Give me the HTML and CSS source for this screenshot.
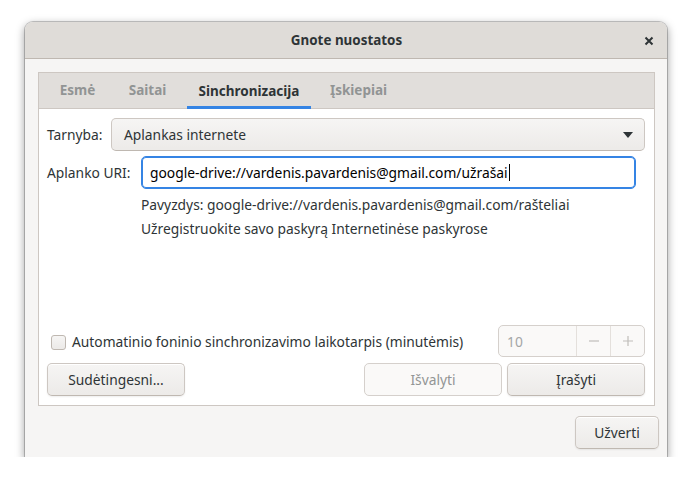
FILE: index.html
```html
<!DOCTYPE html>
<html lang="lt">
<head>
<meta charset="utf-8">
<title>Gnote nuostatos</title>
<link rel="stylesheet" href="styles.css">
</head>
<body>
<div class="window">
  <div class="header">
    <span class="title">Gnote nuostatos</span>
    <span class="close">
      <svg width="10" height="10" viewBox="0 0 10 10"><path d="M1.5 1.5 L8.5 8.5 M8.5 1.5 L1.5 8.5" stroke="#2e3436" stroke-width="2" fill="none"/></svg>
    </span>
  </div>
  <div class="content">
    <div class="notebook">
      <div class="tabs">
        <div class="tab tab-general">Esmė</div>
        <div class="tab tab-links">Saitai</div>
        <div class="tab tab-sync active">Sinchronizacija</div>
        <div class="tab tab-addins">Įskiepiai</div>
      </div>
      <div class="page">
        <div class="row">
          <span class="label label-service">Tarnyba:</span>
          <div class="combo">
            <span>Aplankas internete</span>
            <svg width="10" height="6" viewBox="0 0 10 6"><path d="M0 0 L10 0 L5 6 Z" fill="#2e3436"/></svg>
          </div>
        </div>
        <div class="row row-uri">
          <span class="label label-uri">Aplanko URI:</span>
          <div class="entry"><span>google-drive://vardenis.pavardenis@gmail.com/užrašai</span><span class="cursor"></span></div>
        </div>
        <div class="hints">
          <div class="hint">Pavyzdys: google-drive://vardenis.pavardenis@gmail.com/rašteliai</div>
          <div class="hint">Užregistruokite savo paskyrą Internetinėse paskyrose</div>
        </div>
        <div class="bottom">
          <div class="row-check">
            <label class="check"><span class="box"></span><span>Automatinio foninio sinchronizavimo laikotarpis (minutėmis)</span></label>
            <div class="spin">
              <span class="spin-val">10</span>
              <span class="spin-btn">
                <svg width="12" height="12" viewBox="0 0 12 12"><path d="M1 6 H11" stroke="#c0bdba" stroke-width="1.2"/></svg>
              </span>
              <span class="spin-btn">
                <svg width="12" height="12" viewBox="0 0 12 12"><path d="M1 6 H11 M6 1 V11" stroke="#c0bdba" stroke-width="1.2"/></svg>
              </span>
            </div>
          </div>
          <div class="row-buttons">
            <button class="btn">Sudėtingesni...</button>
            <div class="btn-group">
              <button class="btn disabled">Išvalyti</button>
              <button class="btn">Įrašyti</button>
            </div>
          </div>
        </div>
      </div>
    </div>
  </div>
  <div class="actions">
    <button class="btn btn-close">Užverti</button>
  </div>
</div>
</body>
</html>
```

FILE: styles.css
```css
* { box-sizing: border-box; }
html, body {
  margin: 0;
  padding: 0;
  background: #ffffff;
  font-family: "Noto Sans", "DejaVu Sans", sans-serif;
  font-size: 13.8px;
  color: #2e3436;
}
.window {
  margin: 22px 0 0 25px;
  width: 642px;
  height: 435px;
  background: #f6f5f4;
  border-radius: 8px 8px 0 0;
  box-shadow: 0 3px 9px 1px rgba(0,0,0,0.35), 0 0 0 1px rgba(0,0,0,0.2);
  display: flex;
  flex-direction: column;
}
.header {
  height: 37px;
  flex: none;
  background: #dfdcd8;
  border-bottom: 1px solid #bfb8b1;
  border-radius: 8px 8px 0 0;
  display: flex;
  align-items: center;
  justify-content: center;
  position: relative;
}
.title {
  font-weight: bold;
  font-size: 13.4px;
  color: #2e3436;
  margin-left: 1px;
}
.close {
  position: absolute;
  right: 13px;
  top: 14px;
  width: 10px;
  height: 10px;
  display: flex;
}
.content {
  padding: 13px 12px 0 13px;
  flex: none;
}
.notebook {
  height: 334px;
  border: 1px solid #cdc7c2;
  background: #ffffff;
  display: flex;
  flex-direction: column;
}
.tabs {
  height: 36px;
  flex: none;
  background: #e1dedb;
  border-bottom: 1px solid #cdc7c2;
  display: flex;
  padding-left: 8px;
  gap: 8px;
}
.tab {
  font-weight: bold;
  font-size: 13.5px;
  color: #919494;
  display: flex;
  align-items: center;
  justify-content: center;
  height: 35px;
  border-bottom: 3px solid transparent;
  padding-top: 2px;
  white-space: nowrap;
}
.tab-general { width: 61px; }
.tab-links { width: 63px; }
.tab-sync { width: 124px; }
.tab-addins { width: 79px; }
.tab.active {
  color: #2e3436;
  border-bottom-color: #3584e4;
  height: 36px;
  margin-bottom: -1px;
}
.page {
  flex: 1;
  padding: 9px 9px 9px 8px;
  display: flex;
  flex-direction: column;
}
.row {
  display: flex;
  align-items: center;
  height: 33px;
}
.row-uri {
  margin-top: 5px;
}
.label {
  flex: none;
}
.label-service { width: 64px; }
.label-uri { width: 94px; }
.combo {
  flex: 1;
  height: 33px;
  border: 1px solid #cdc7c2;
  border-bottom-color: #bfb8b1;
  border-radius: 5px;
  background: linear-gradient(to top, #edebe9 2px, #f6f5f4);
  display: flex;
  align-items: center;
  justify-content: space-between;
  padding: 0 11px 0 12px;
}
.entry {
  width: 495px;
  height: 33px;
  border: 1px solid #3584e4;
  box-shadow: inset 0 0 0 1px #3584e4;
  border-radius: 5px;
  background: #ffffff;
  display: flex;
  align-items: center;
  padding: 0 8px;
  color: #000000;
}
.cursor {
  display: inline-block;
  width: 1px;
  height: 17px;
  background: #000;
  margin-left: 1px;
}
.hints {
  margin-left: 94px;
  margin-top: 4px;
}
.hint {
  line-height: 24px;
  color: #2e3436;
}
.bottom {
  margin-top: auto;
  display: flex;
  flex-direction: column;
  gap: 6px;
}
.row-check {
  display: flex;
  align-items: center;
  justify-content: space-between;
  height: 32px;
}
.check {
  display: flex;
  align-items: center;
  gap: 6px;
  padding-left: 4px;
}
.box {
  width: 15px;
  height: 15px;
  border: 1px solid #bfb8b1;
  border-radius: 3px;
  background: linear-gradient(to top, #edebe9 2px, #f6f5f4);
  margin-top: 2px;
}
.spin {
  width: 147px;
  height: 32px;
  display: flex;
  border: 1px solid #d5d0cc;
  border-radius: 5px;
  background: #faf9f8;
}
.spin-val {
  flex: 1;
  display: flex;
  align-items: center;
  padding-left: 8px;
  color: #a4a6a6;
}
.spin-btn {
  width: 34px;
  border-left: 1px solid #e4e0dc;
  display: flex;
  align-items: center;
  justify-content: center;
}
.row-buttons {
  display: flex;
  justify-content: space-between;
}
.btn-group {
  display: flex;
  gap: 5px;
}
.btn {
  font-family: inherit;
  font-size: 13.8px;
  color: #2e3436;
  width: 138px;
  height: 33px;
  border: 1px solid #cdc7c2;
  border-bottom-color: #bfb8b1;
  border-radius: 5px;
  background: linear-gradient(to top, #edebe9 2px, #f6f5f4);
  padding: 0;
  box-shadow: inset 0 1px #ffffff, 0 1px 2px rgba(0,0,0,0.07);
}
.btn.disabled {
  background: #faf9f8;
  border-color: #d5d0cc;
  color: #929595;
  box-shadow: none;
}
.actions {
  display: flex;
  justify-content: flex-end;
  padding: 10px 8px 8px;
}
.btn-close {
  width: 84px;
}
```
